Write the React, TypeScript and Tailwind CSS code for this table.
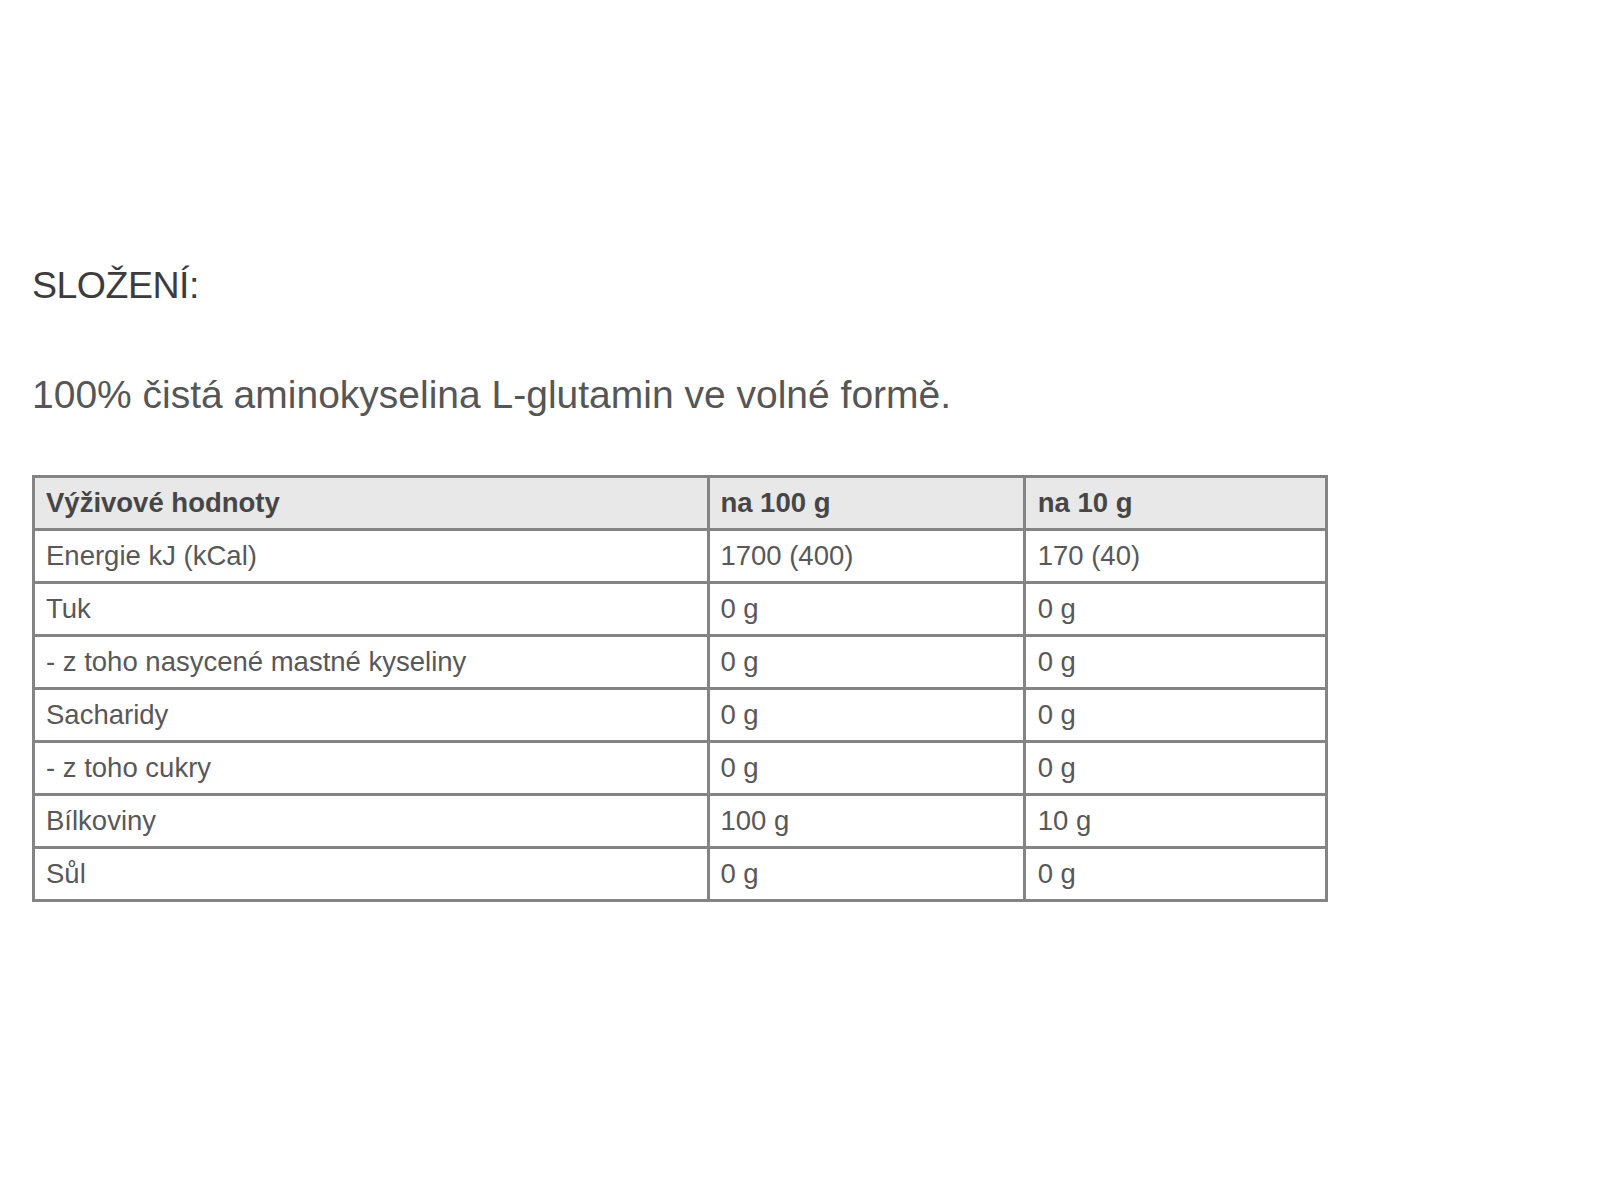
const rows: [string, string, string][] = [
  ['Energie kJ (kCal)', '1700 (400)', '170 (40)'],
  ['Tuk', '0 g', '0 g'],
  ['- z toho nasycené mastné kyseliny', '0 g', '0 g'],
  ['Sacharidy', '0 g', '0 g'],
  ['- z toho cukry', '0 g', '0 g'],
  ['Bílkoviny', '100 g', '10 g'],
  ['Sůl', '0 g', '0 g'],
]

export default function App() {
  return (
    <div
      className="min-h-[1200px] bg-white pl-[32px] pt-[265px] text-[#4a4a4a]"
      style={{ fontFamily: '"Liberation Sans", Arial, sans-serif' }}
    >
      <h2 className="text-[37.5px] leading-[40px] text-[#3c3c3c] tracking-[-0.5px]">SLOŽENÍ:</h2>

      <p className="mt-[68px] text-[39px] leading-[44px] text-[#565656]">
        100% čistá aminokyselina L-glutamin ve volné formě.
      </p>

      <table className="mt-[58px] w-[1296px] border-collapse border-[3px] border-[#848484] text-[27.5px]">
        <colgroup>
          <col className="w-[677px]" />
          <col className="w-[316px]" />
          <col className="w-[303px]" />
        </colgroup>
        <thead>
          <tr className="h-[53px] bg-[#e8e8e8]">
            <th className="border-[3px] border-[#848484] px-[11px] text-left font-bold text-[#464646]">Výživové hodnoty</th>
            <th className="border-[3px] border-[#848484] px-[10px] text-left font-bold text-[#464646]">na 100 g</th>
            <th className="border-[3px] border-[#848484] px-[12px] text-left font-bold text-[#464646]">na 10 g</th>
          </tr>
        </thead>
        <tbody>
          {rows.map(([name, a, b]) => (
            <tr key={name} className="h-[53px]">
              <td className="border-[3px] border-[#848484] px-[11px] text-[#585858]">{name}</td>
              <td className="border-[3px] border-[#848484] px-[10px] text-[#585858]">{a}</td>
              <td className="border-[3px] border-[#848484] px-[12px] text-[#585858]">{b}</td>
            </tr>
          ))}
        </tbody>
      </table>
    </div>
  )
}
